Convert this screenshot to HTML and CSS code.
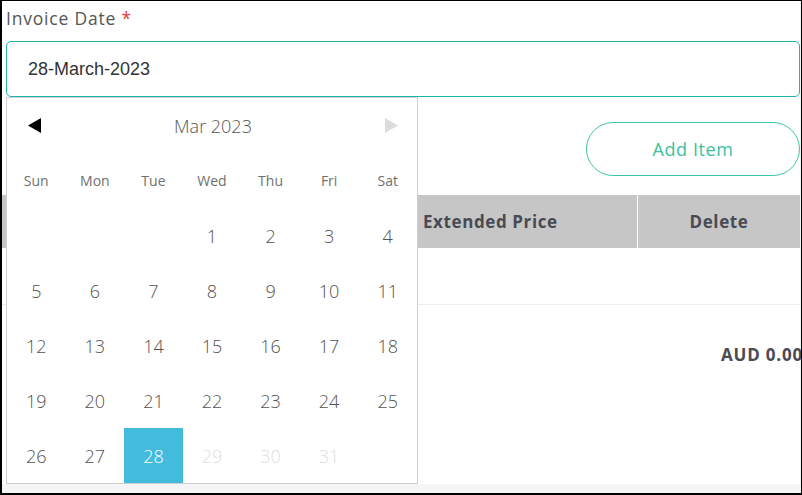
FILE: index.html
```html
<!DOCTYPE html>
<html lang="en">
<head>
<meta charset="utf-8">
<title>Invoice Date</title>
<link rel="stylesheet" href="styles.css">
</head>
<body>
<div class="frame">
  <div class="main">
    <div class="field">
      <label class="label">Invoice Date <span class="req">*</span></label>
      <div class="input">28-March-2023</div>
    </div>
    <div class="actions">
      <button class="add-btn">Add Item</button>
    </div>
    <div class="table">
      <div class="thead">
        <div class="th th-hidden"></div>
        <div class="th th-price">Extended Price</div>
        <div class="th th-delete">Delete</div>
      </div>
      <div class="trow"></div>
      <div class="totals">
        <span class="total">AUD 0.00</span>
      </div>
    </div>
  </div>

  <div class="datepicker">
    <div class="dp-head">
      <svg class="arrow" width="13" height="15" viewBox="0 0 13 15"><polygon points="13,0 13,15 0,7.5" fill="#000"/></svg>
      <span class="dp-title">Mar 2023</span>
      <svg class="arrow" width="13" height="15" viewBox="0 0 13 15"><polygon points="0,0 0,15 13,7.5" fill="#dcdcdc"/></svg>
    </div>
    <div class="dp-grid">
      <div class="wd">Sun</div><div class="wd">Mon</div><div class="wd">Tue</div><div class="wd">Wed</div><div class="wd">Thu</div><div class="wd">Fri</div><div class="wd">Sat</div>
      <div class="day"></div><div class="day"></div><div class="day"></div><div class="day">1</div><div class="day">2</div><div class="day">3</div><div class="day">4</div>
      <div class="day">5</div><div class="day">6</div><div class="day">7</div><div class="day">8</div><div class="day">9</div><div class="day">10</div><div class="day">11</div>
      <div class="day">12</div><div class="day">13</div><div class="day">14</div><div class="day">15</div><div class="day">16</div><div class="day">17</div><div class="day">18</div>
      <div class="day">19</div><div class="day">20</div><div class="day">21</div><div class="day">22</div><div class="day">23</div><div class="day">24</div><div class="day">25</div>
      <div class="day">26</div><div class="day">27</div><div class="day selected">28</div><div class="day disabled">29</div><div class="day disabled">30</div><div class="day disabled">31</div><div class="day"></div>
    </div>
  </div>
</div>
</body>
</html>
```
FILE: styles.css
```css
* { box-sizing: border-box; }
html, body { margin: 0; padding: 0; background: #fff; }
body { font-family: "Open Sans", "DejaVu Sans", sans-serif; }

.frame {
  width: 802px;
  height: 495px;
  border-top: 1px solid #000;
  border-left: 2px solid #000;
  border-right: 1px solid #000;
  border-bottom: 2px solid #000;
  background: #f4f5f7;
  overflow: hidden;
  position: relative;
}

.main {
  width: 798px;
  height: 483px;
  background: #fff;
}

.field { padding: 4px 0 0 4px; }
.label {
  display: block;
  font-size: 17.5px;
  letter-spacing: 0.8px;
  line-height: 26px;
  color: #555;
  height: 36px;
}
.req { color: #e0393e; }

.input {
  height: 56px;
  border: 1px solid #22b3a9;
  border-radius: 5px;
  padding-left: 21px;
  font-family: "Liberation Sans", Arial, sans-serif;
  font-size: 18px;
  color: #333;
  display: flex;
  align-items: center;
}

.actions {
  display: flex;
  justify-content: flex-end;
  padding-top: 25px;
  height: 98px;
}
.add-btn {
  width: 214px;
  height: 54px;
  border: 1px solid #3cc7a6;
  border-radius: 27px;
  background: #fff;
  color: #3dbf9b;
  font-family: "Open Sans", sans-serif;
  font-size: 18px;
  letter-spacing: 0.6px;
  padding: 0;
}

.table { width: 798px; }
.thead {
  display: flex;
  height: 53px;
  background: #c6c6c6;
}
.th {
  display: flex;
  align-items: center;
  font-size: 17px;
  font-weight: 700;
  letter-spacing: 0.6px;
  color: #4a4a54;
}
.th-hidden { width: 408px; }
.th-price { width: 228px; padding-left: 13px; border-right: 1px solid #fff; }
.th-delete { flex: 1; justify-content: center; }

.trow {
  height: 57px;
  border-bottom: 1px solid #ececec;
}
.totals {
  display: flex;
  justify-content: flex-end;
  align-items: center;
  height: 98px;
}
.total {
  font-size: 17px;
  font-weight: 700;
  letter-spacing: 0.8px;
  color: #4a4a54;
  margin-right: -3px;
}

.datepicker {
  position: absolute;
  left: 4px;
  top: 96px;
  width: 412px;
  height: 387px;
  border: 1px solid #cfcfcf;
  background: #fff;
}
.dp-head {
  height: 55px;
  display: flex;
  align-items: center;
  justify-content: space-between;
  padding: 0 19px 0 21px;
}
.dp-title {
  font-size: 18px;
  font-weight: 300;
  color: #555;
}
.dp-grid {
  display: grid;
  grid-template-columns: repeat(7, 1fr);
  grid-auto-rows: 55px;
}
.wd {
  display: flex;
  align-items: center;
  justify-content: center;
  font-size: 14px;
  color: #707070;
}
.day {
  display: flex;
  align-items: center;
  justify-content: center;
  font-size: 18px;
  font-weight: 300;
  color: #565250;
}
.day.selected { background: #42bbdd; color: #fff; }
.day.disabled { color: #dedede; }
```
